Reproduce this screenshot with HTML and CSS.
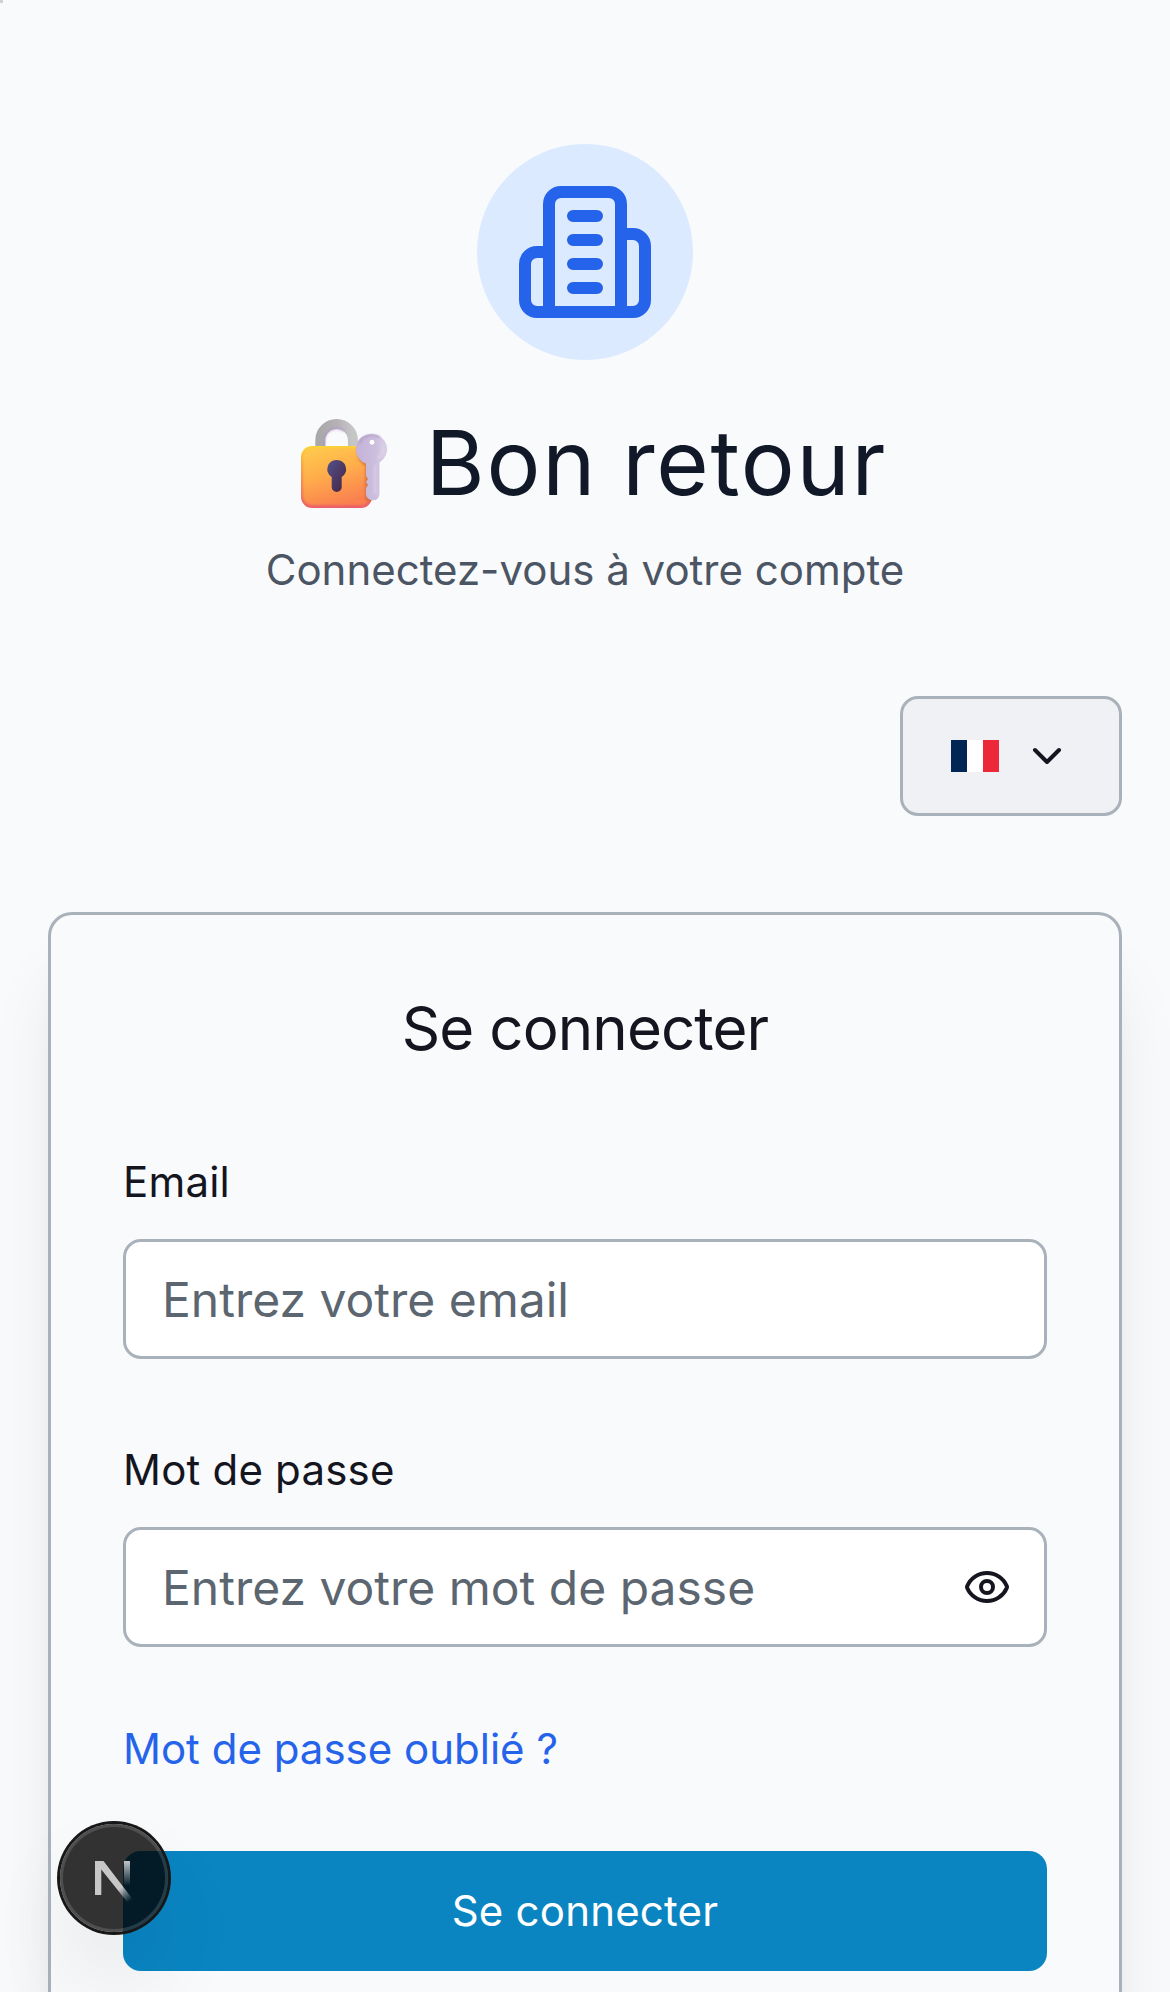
FILE: index.html
```html
<!DOCTYPE html>
<html lang="fr">
<head>
<meta charset="utf-8">
<title>Se connecter</title>
<link rel="stylesheet" href="styles.css">
</head>
<body>
<span class="marker"></span>
<main class="page">
  <header class="intro">
    <div class="logo">
      <svg class="logo-icon" viewBox="0 0 24 24"><path d="M6 22V4a2 2 0 0 1 2-2h8a2 2 0 0 1 2 2v18Z"/><path d="M6 12H4a2 2 0 0 0-2 2v6a2 2 0 0 0 2 2h2"/><path d="M18 9h2a2 2 0 0 1 2 2v9a2 2 0 0 1-2 2h-2"/><path d="M10 6h4M10 10h4M10 14h4M10 18h4"/></svg>
    </div>
    <h1 class="heading">
      <svg class="lock" viewBox="0 0 90 92">
        <defs>
          <linearGradient id="body" x1="0.2" y1="0" x2="0.55" y2="1"><stop offset="0" stop-color="#ffc84d"/><stop offset=".45" stop-color="#ffad4c"/><stop offset="1" stop-color="#fa8050"/></linearGradient>
          <linearGradient id="edge" x1="0" y1="0" x2="0" y2="1"><stop offset="0" stop-color="#fbd634"/><stop offset=".3" stop-color="#f3a540"/><stop offset="1" stop-color="#eb5f68"/></linearGradient>
          <linearGradient id="steel" x1="0" y1="0" x2="1" y2="0"><stop offset="0" stop-color="#a9a9aa"/><stop offset=".5" stop-color="#b4b1b6"/><stop offset="1" stop-color="#c6c6c7"/></linearGradient>
          <linearGradient id="hole" x1="0" y1="0" x2="1" y2="1"><stop offset="0" stop-color="#53528a"/><stop offset="1" stop-color="#462343"/></linearGradient>
          <linearGradient id="key" x1="0" y1="0" x2="1" y2="0"><stop offset="0" stop-color="#c5b2d9"/><stop offset=".6" stop-color="#cbbedd"/><stop offset="1" stop-color="#dbd0e8"/></linearGradient>
          <filter id="soft" x="-20%" y="-20%" width="140%" height="140%"><feGaussianBlur stdDeviation="1"/></filter>
          <clipPath id="bodyclip"><rect x="2" y="29" width="71" height="62" rx="11"/></clipPath>
        </defs>
        <path d="M21.300 31v-7.700a16.300 16.300 0 0 1 32.600 0V31" fill="none" stroke="url(#steel)" stroke-width="10"/>
        <path d="M25.300 30v-6.700a12.300 12.300 0 0 1 20-9" fill="none" stroke="#b18cca" stroke-width="2" opacity=".6" filter="url(#soft)"/>
        <rect x="2" y="29" width="71" height="62" rx="11" fill="url(#edge)"/>
        <g clip-path="url(#bodyclip)">
          <rect x="4" y="31" width="67" height="57" rx="9" fill="url(#body)" filter="url(#soft)"/>
          <path d="M58 30c-1 9 2 15 8 19v33c2 4 8 3 10 0V30z" fill="#c9683f" opacity=".65" filter="url(#soft)"/>
        </g>
        <path d="M37.700 43a9.200 9.200 0 0 1 5 17v10a5 5 0 0 1-10 0V60a9.200 9.200 0 0 1 5-17z" fill="url(#hole)"/>
        <path fill-rule="evenodd" d="M73 17a15.200 15.200 0 0 1 7.500 28.400V77a6.200 6.200 0 0 1-6 6.300c-4 .2-7.500-2.500-7.500-6.300v-6l2-3-2-3 2-3-2-3V46.500A15.200 15.200 0 0 1 73 17zm0 6a2.300 2.300 0 1 0 .1 4.600A2.300 2.300 0 0 0 73 23z" fill="url(#key)"/>
        <path d="M60 27c3-8 12-11 21-7" fill="none" stroke="#a493b8" stroke-width="1.600" opacity=".7" filter="url(#soft)"/>
        <path d="M84 28c1 7-1 11-6 14M76 48v29" fill="none" stroke="#e6ddef" stroke-width="1.500" opacity=".7" filter="url(#soft)"/>
        <circle cx="73" cy="25.300" r="2.300" fill="#fff"/>
      </svg>
      <span>Bon retour</span>
    </h1>
    <p class="subtitle">Connectez-vous à votre compte</p>
  </header>

  <button class="language" type="button" aria-label="Français">
    <svg class="flag" viewBox="0 0 3 2"><path fill="#fff" d="M0 0h3v2H0z"/><path fill="#002654" d="M0 0h1v2H0z"/><path fill="#ed2939" d="M2 0h1v2H2z"/></svg>
    <svg class="icon" viewBox="0 0 24 24"><path d="m6 9 6 6 6-6"/></svg>
  </button>

  <section class="card">
    <h2 class="card-title">Se connecter</h2>
    <form class="form">
      <label class="label" for="email">Email</label>
      <div class="control"><input class="input" id="email" type="email" placeholder="Entrez votre email"></div>
      <label class="label" for="password">Mot de passe</label>
      <div class="control">
        <input class="input" id="password" type="password" placeholder="Entrez votre mot de passe">
        <svg class="icon" viewBox="0 0 24 24"><path d="M2.062 12.348a1 1 0 0 1 0-.696 10.750 10.750 0 0 1 19.876 0 1 1 0 0 1 0 .696 10.750 10.750 0 0 1-19.876 0"/><circle cx="12" cy="12" r="3"/></svg>
      </div>
      <a class="forgot" href="#">Mot de passe oublié ?</a>
      <button class="submit" type="button">Se connecter</button>
    </form>
  </section>
</main>

<div class="dev-badge">
  <svg class="dev-icon" viewBox="0 0 40 40">
    <defs>
      <linearGradient id="diag" gradientUnits="userSpaceOnUse" x1="26" y1="28" x2="36" y2="41"><stop stop-color="#fff" stop-opacity=".73"/><stop offset="1" stop-color="#fff" stop-opacity="0"/></linearGradient>
      <linearGradient id="stem" gradientUnits="userSpaceOnUse" x1="0" y1="2" x2="0" y2="26"><stop stop-color="#fff" stop-opacity=".73"/><stop offset="1" stop-color="#fff" stop-opacity="0"/></linearGradient>
    </defs>
    <path d="M1 1h8.500L38.500 39 34 43 7.300 9.500V35H1z" fill="url(#diag)"/>
    <path d="M30 1h6v25h-6z" fill="url(#stem)"/>
  </svg>
</div>
</body>
</html>
```
FILE: styles.css
```css
* { box-sizing: border-box; }

body {
  margin: 0;
  height: 1992px;
  overflow: hidden;
  background: #f9fafc;
  color: #14151f;
  font-family: Inter, "Liberation Sans", sans-serif;
  font-size: 42px;
  line-height: 60px;
}

h1, h2, p { margin: 0; font-weight: 400; }

.marker {
  position: absolute;
  top: 0;
  left: 0;
  width: 3px;
  height: 3px;
  background: #d0d1d3;
}

.page {
  display: flex;
  flex-direction: column;
  height: 1992px;
  padding: 144px 48px 0;
}

.intro {
  display: flex;
  flex-direction: column;
  align-items: center;
}

.logo {
  display: flex;
  align-items: center;
  justify-content: center;
  width: 216px;
  height: 216px;
  border-radius: 50%;
  background: #dbeafe;
}

.logo-icon, .icon {
  flex: none;
  fill: none;
  stroke: currentColor;
  stroke-width: 2;
  stroke-linecap: round;
  stroke-linejoin: round;
}

.logo-icon { width: 144px; height: 144px; color: #2563eb; }
.icon { width: 48px; height: 48px; }

.heading {
  display: flex;
  align-items: center;
  gap: 37px;
  height: 108px;
  margin-top: 48px;
  padding: 2px 0 0 16px;
  color: #111827;
  font-size: 90px;
  line-height: 108px;
  letter-spacing: 1.75px;
  word-spacing: -2px;
}

.lock { width: 90px; height: 92px; }

.subtitle { margin-top: 24px; color: #4b5563; }

.language {
  display: flex;
  flex: none;
  align-items: center;
  align-self: flex-end;
  gap: 24px;
  width: 222px;
  height: 120px;
  margin-top: 96px;
  padding: 0 48px;
  border: 3px solid #a9b2ba;
  border-radius: 18px;
  background: #f0f1f5;
  color: inherit;
}

.flag { width: 48px; height: 32px; }

.card {
  flex: none;
  height: 1400px;
  margin-top: 96px;
  padding: 72px;
  border: 3px solid #a9b2ba;
  border-radius: 24px;
  background: #f9fafc;
  box-shadow: 0 60px 75px -15px rgba(0, 0, 0, 0.1), 0 24px 30px -18px rgba(0, 0, 0, 0.1);
}

.card-title {
  font-size: 60px;
  line-height: 82px;
  text-align: center;
  letter-spacing: -0.9px;
}

.form { display: flex; flex-direction: column; padding-top: 2px; }

.label { margin: 81px 0 27px; letter-spacing: 0.2px; }

.control {
  display: flex;
  align-items: center;
  height: 120px;
  padding: 0 33px 0 36px;
  border: 3px solid #a9b2ba;
  border-radius: 18px;
  background: #fff;
}

.input {
  flex: 1;
  min-width: 0;
  padding: 2px 0 0;
  border: 0;
  outline: 0;
  background: none;
  font: inherit;
  font-size: 48px;
  line-height: 72px;
}

.input::placeholder { color: #5c6670; opacity: 1; }

.forgot {
  align-self: flex-start;
  margin: 72px 0;
  color: #2563eb;
  text-decoration: none;
}

.submit {
  height: 120px;
  padding: 0;
  border: 0;
  border-radius: 18px;
  background: #0a85c2;
  color: #fff;
  font: inherit;
  letter-spacing: 0.2px;
}

.dev-badge {
  position: absolute;
  left: 60px;
  top: 1824px;
  display: flex;
  align-items: center;
  justify-content: center;
  width: 108px;
  height: 108px;
  padding-top: 4px;
  border-radius: 50%;
  background: rgba(0, 0, 0, 0.8);
  box-shadow: 0 0 0 3px #171717, inset 0 0 0 3px rgba(255, 255, 255, 0.14), 0 48px 96px -24px rgba(0, 0, 0, 0.24);
}

.dev-icon { width: 40px; height: 40px; overflow: visible; }
```
